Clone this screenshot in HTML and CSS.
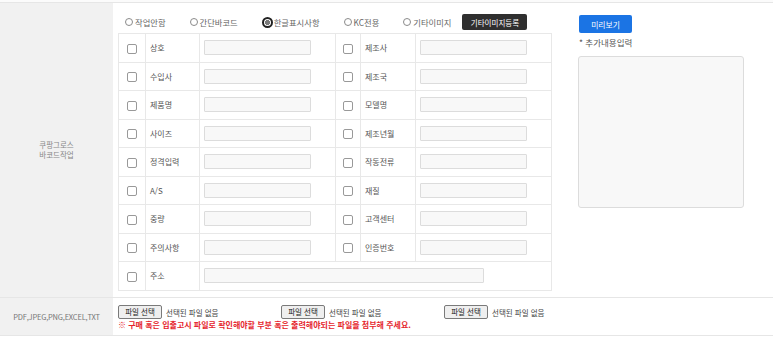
FILE: index.html
```html
<!DOCTYPE html>
<html lang="ko">
<head>
<meta charset="utf-8">
<title>쿠팡그로스 바코드작업</title>
<link rel="stylesheet" href="styles.css">
</head>
<body>
<div class="form">
  <div class="row row-top"></div>
  <div class="row row-main">
    <div class="th">쿠팡그로스<br>바코드작업</div>
    <div class="td td-main">
      <div class="left">
        <div class="radio-row">
          <div class="radios">
            <label class="radio"><span class="dot"></span>작업안함</label>
            <label class="radio"><span class="dot"></span>간단바코드</label>
            <label class="radio checked"><span class="dot"></span>한글표시사항</label>
            <label class="radio"><span class="dot"></span>KC전용</label>
            <label class="radio"><span class="dot"></span>기타이미지</label>
          </div>
          <button class="btn-dark">기타이미지등록</button>
        </div>
        <table class="grid">
          <colgroup>
            <col class="c-chk"><col class="c-lbl"><col class="c-inp">
            <col class="c-chk2"><col class="c-lbl2"><col class="c-inp">
          </colgroup>
          <tr><td class="chk"><span class="box"></span></td><td class="lbl">상호</td><td class="inp"><span class="field"></span></td>
              <td class="chk"><span class="box"></span></td><td class="lbl">제조사</td><td class="inp"><span class="field"></span></td></tr>
          <tr><td class="chk"><span class="box"></span></td><td class="lbl">수입사</td><td class="inp"><span class="field"></span></td>
              <td class="chk"><span class="box"></span></td><td class="lbl">제조국</td><td class="inp"><span class="field"></span></td></tr>
          <tr><td class="chk"><span class="box"></span></td><td class="lbl">제품명</td><td class="inp"><span class="field"></span></td>
              <td class="chk"><span class="box"></span></td><td class="lbl">모델명</td><td class="inp"><span class="field"></span></td></tr>
          <tr><td class="chk"><span class="box"></span></td><td class="lbl">사이즈</td><td class="inp"><span class="field"></span></td>
              <td class="chk"><span class="box"></span></td><td class="lbl">제조년월</td><td class="inp"><span class="field"></span></td></tr>
          <tr><td class="chk"><span class="box"></span></td><td class="lbl">정격입력</td><td class="inp"><span class="field"></span></td>
              <td class="chk"><span class="box"></span></td><td class="lbl">작동전류</td><td class="inp"><span class="field"></span></td></tr>
          <tr><td class="chk"><span class="box"></span></td><td class="lbl">A/S</td><td class="inp"><span class="field"></span></td>
              <td class="chk"><span class="box"></span></td><td class="lbl">재질</td><td class="inp"><span class="field"></span></td></tr>
          <tr><td class="chk"><span class="box"></span></td><td class="lbl">중량</td><td class="inp"><span class="field"></span></td>
              <td class="chk"><span class="box"></span></td><td class="lbl">고객센터</td><td class="inp"><span class="field"></span></td></tr>
          <tr><td class="chk"><span class="box"></span></td><td class="lbl">주의사항</td><td class="inp"><span class="field"></span></td>
              <td class="chk"><span class="box"></span></td><td class="lbl">인증번호</td><td class="inp"><span class="field"></span></td></tr>
          <tr><td class="chk"><span class="box"></span></td><td class="lbl">주소</td><td class="inp" colspan="4"><span class="field field-wide"></span></td></tr>
        </table>
      </div>
      <div class="right">
        <button class="btn-blue">미리보기</button>
        <div class="note">* 추가내용입력</div>
        <div class="textarea"></div>
      </div>
    </div>
  </div>
  <div class="row row-file">
    <div class="th th-file">PDF,JPEG,PNG,EXCEL,TXT</div>
    <div class="td td-file">
      <div class="files">
        <div class="file"><span class="file-btn">파일 선택</span><span class="file-txt">선택된 파일 없음</span></div>
        <div class="file"><span class="file-btn">파일 선택</span><span class="file-txt">선택된 파일 없음</span></div>
        <div class="file"><span class="file-btn">파일 선택</span><span class="file-txt">선택된 파일 없음</span></div>
      </div>
      <div class="warn">※ 구매 혹은 입출고시 파일로 확인해야할 부분 혹은 출력해야되는 파일을 첨부해 주세요.</div>
    </div>
  </div>
</div>
</body>
</html>
```

FILE: styles.css
```css
* { box-sizing: border-box; }
html, body { margin: 0; padding: 0; background: #fff; }
body {
  font-family: "Noto Sans CJK KR", "Noto Sans", sans-serif;
  font-size: 8px;
  color: #555;
}
.form { width: 773px; }
.row { display: flex; border-bottom: 1px solid #e6e6e6; }
.row-top { height: 3px; background: #fbfbfb; }
.th {
  width: 113px;
  flex: none;
  background: #f1f1f1;
  display: flex;
  align-items: center;
  justify-content: center;
  text-align: center;
  color: #888;
  font-size: 7.5px;
  line-height: 10px;
}
.td { flex: 1; padding-left: 5px; }
.row-main { height: 295px; }
.td-main { display: flex; padding-top: 10px; }
.left { width: 433px; flex: none; }
.radio-row { display: flex; align-items: center; height: 18px; margin-left: 7px; margin-bottom: 2px; }
.radios { display: flex; gap: 24px; }
.radio { display: flex; align-items: center; font-size: 8.3px; color: #666; }
.dot {
  width: 8px; height: 8px; border: 1px solid #8a8a8a; border-radius: 50%;
  margin-right: 2px; background: #fff;
}
.radio.checked .dot {
  width: 11px; height: 11px; border: 2px solid #222;
  background: radial-gradient(circle, #7a7a7a 0 2.3px, #fff 2.8px);
  margin-right: 1px; margin-left: 0;
}
.btn-dark {
  margin-left: 11px;
  height: 16px; width: 65px;
  border: 0; border-radius: 2px;
  background: #2f2f2f; color: #fff;
  font-family: inherit; font-size: 7.5px; padding: 0;
}
.grid { border-collapse: collapse; width: 433px; table-layout: fixed; }
.grid td { border: 1px solid #e8e8e8; height: 28.5px; padding: 0; vertical-align: middle; }
.c-chk { width: 27px; }
.c-lbl { width: 54px; }
.c-inp { width: 136px; }
.c-chk2 { width: 25px; }
.c-lbl2 { width: 55px; }
.chk { text-align: center; }
.box {
  display: inline-block; width: 10px; height: 10px;
  border: 1px solid #999; border-radius: 2px; background: #fff;
  vertical-align: middle;
}
.lbl { padding-left: 4px !important; color: #555; }
.inp { padding-left: 4px !important; }
.field {
  display: block; width: 107px; height: 15px;
  border: 1px solid #dcdcdc; background: #f8f8f8; border-radius: 1px;
}
.field-wide { width: 280px; }
.right { margin-left: 27px; padding-top: 2px; display: flex; flex-direction: column; align-items: flex-start; }
.btn-blue {
  margin-left: 1px;
  width: 53px; height: 18px;
  border: 0; border-radius: 2px;
  background: #1b74e4; color: #fff;
  font-family: inherit; font-size: 7.8px; padding: 0;
}
.note { margin-top: 3px; font-size: 8.5px; line-height: 13px; color: #555; margin-left: 1px; }
.textarea {
  margin-top: 7px;
  width: 166px; height: 152px;
  border: 1px solid #dcdcdc; border-radius: 3px; background: #f8f8f8;
}
.row-file { height: 38px; }
.th-file { font-size: 7.5px; color: #777; letter-spacing: -0.2px; }
.td-file { padding-top: 7px; }
.files { display: flex; }
.file { width: 163px; display: flex; align-items: center; gap: 4px; }
.file-btn {
  display: inline-block; height: 14px; width: 44px;
  border: 1px solid #7a7a7a; border-radius: 2px; background: #efefef;
  color: #222; font-size: 7.5px; line-height: 12px; text-align: center;
}
.file-txt { font-size: 7.5px; color: #444; }
.warn { color: #e5242c; font-weight: bold; font-size: 8px; line-height: 10px; margin-top: 1px; }
```
